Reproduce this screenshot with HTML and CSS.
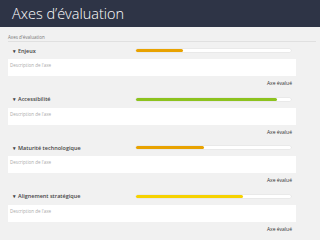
FILE: index.html
```html
<!DOCTYPE html>
<html lang="fr">
<head>
    <meta charset="UTF-8">
    <title>Axes d'évaluation</title>
    <link rel="stylesheet" href="styles.css">
</head>
<body>
    <header class="topbar">
        <h1>Axes d’évaluation</h1>
    </header>
    <div class="content">
        <div class="crumb">Axes d'évaluation</div>

        <div class="axe">
            <div class="axe-head">
                <span class="axe-name"><span class="caret">▾</span>Enjeux</span>
                <div class="gauge"><div class="gauge-fill orange" style="width: 30%"></div></div>
            </div>
            <div class="axe-desc">Description de l'axe</div>
            <div class="axe-status">Axe évalué</div>
        </div>

        <div class="axe">
            <div class="axe-head">
                <span class="axe-name"><span class="caret">▾</span>Accessibilité</span>
                <div class="gauge"><div class="gauge-fill green" style="width: 91%"></div></div>
            </div>
            <div class="axe-desc">Description de l'axe</div>
            <div class="axe-status">Axe évalué</div>
        </div>

        <div class="axe">
            <div class="axe-head">
                <span class="axe-name"><span class="caret">▾</span>Maturité technologique</span>
                <div class="gauge"><div class="gauge-fill orange" style="width: 44%"></div></div>
            </div>
            <div class="axe-desc">Description de l'axe</div>
            <div class="axe-status">Axe évalué</div>
        </div>

        <div class="axe">
            <div class="axe-head">
                <span class="axe-name"><span class="caret">▾</span>Alignement stratégique</span>
                <div class="gauge"><div class="gauge-fill yellow" style="width: 69%"></div></div>
            </div>
            <div class="axe-desc">Description de l'axe</div>
            <div class="axe-status">Axe évalué</div>
        </div>
    </div>
</body>
</html>
```

FILE: styles.css
```css
body {
    margin: 0;
    font-family: "Open Sans", Arial, sans-serif;
    background-color: #f1f1f1;
    color: #333;
}
.topbar {
    height: 27px;
    background-color: #2e3446;
    display: flex;
    align-items: center;
    padding-left: 12px;
}
.topbar h1 {
    margin: 0;
    font-size: 14.5px;
    font-weight: 300;
    color: #ffffff;
    line-height: 1;
    padding-top: 1px;
}
.content {
    padding-left: 8px;
}
.crumb {
    padding-top: 7px;
    padding-bottom: 1px;
    line-height: 6px;
    font-size: 4.5px;
    color: #777;
    border-bottom: 1px solid #e0e0e0;
    margin-right: 4px;
}
.axe {
    width: 288px;
}
.axe-head {
    height: 17px;
    display: flex;
    align-items: center;
}
.axe-name {
    width: 123px;
    padding-left: 5px;
    font-size: 5.5px;
    font-weight: 600;
    color: #444;
}
.caret {
    font-size: 5px;
    margin-right: 2px;
}
.gauge {
    width: 155px;
    height: 3px;
    background: #ffffff;
    border-radius: 2px;
    box-shadow: 0 0 0 0.5px #e2e2e2;
}
.gauge-fill {
    height: 100%;
    border-radius: 2px;
}
.orange { background-color: #e8a200; }
.green { background-color: #8cc21e; }
.yellow { background-color: #f6d200; }
.axe-desc {
    height: 17px;
    background: #ffffff;
    padding-left: 2px;
    font-size: 4.5px;
    line-height: 13px;
    color: #aaa;
}
.axe-status {
    height: 14.5px;
    line-height: 15px;
    text-align: right;
    padding-right: 4px;
    font-size: 5px;
    color: #333;
}
```
